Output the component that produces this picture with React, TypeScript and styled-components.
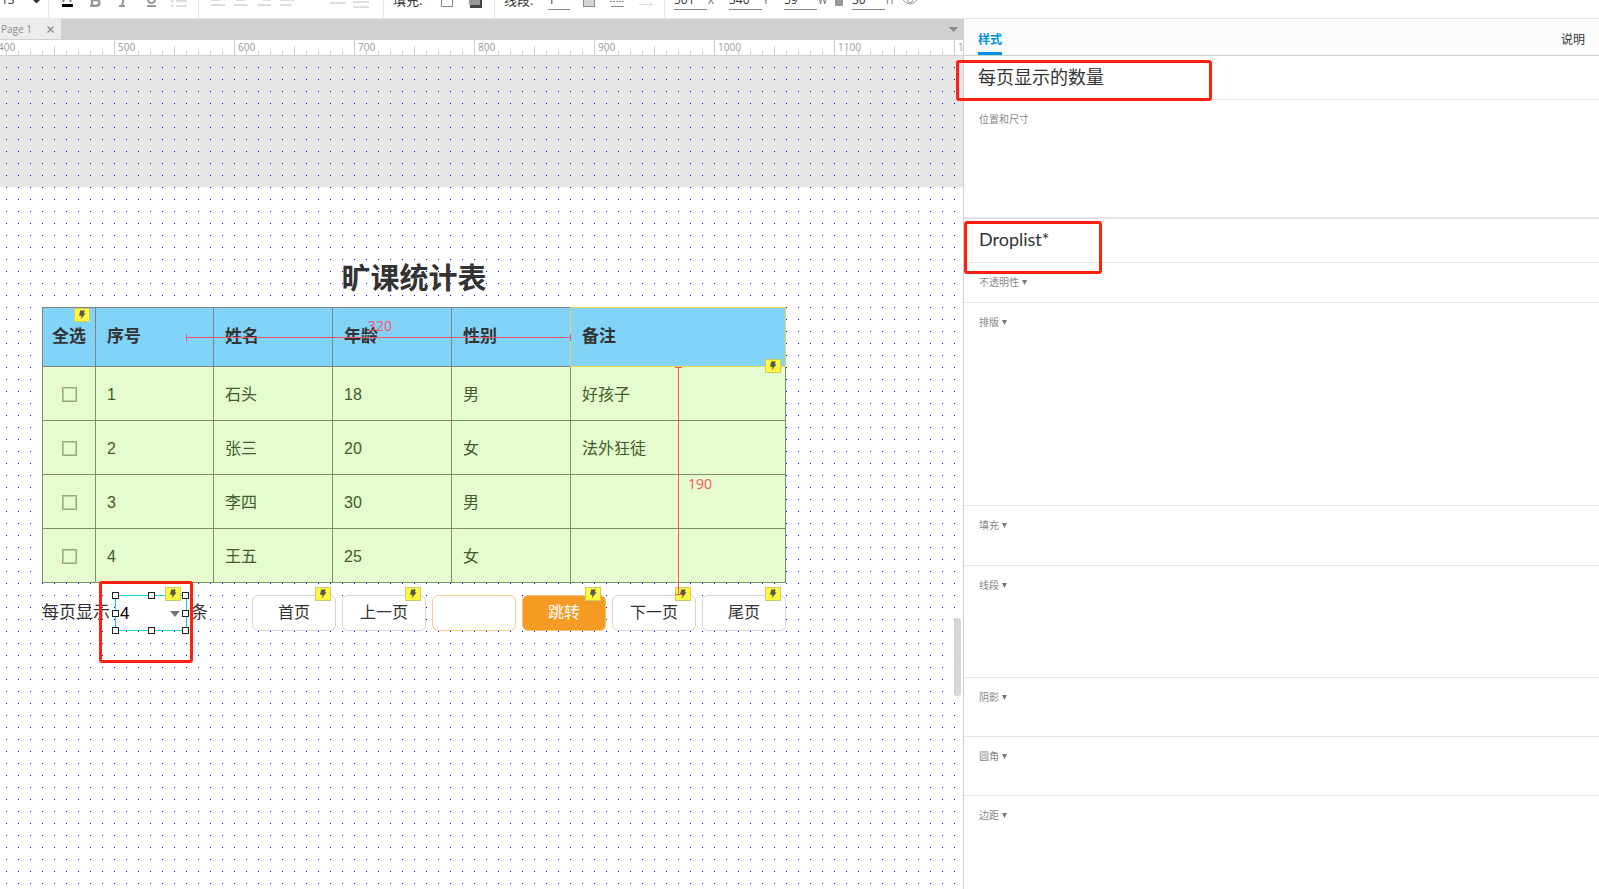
import React from "react";
import styled, { createGlobalStyle, css } from "styled-components";

const GlobalStyle = createGlobalStyle`
  * { box-sizing: border-box; }
  body {
    margin: 0;
    background: #fff;
    color: #333;
    font-family: "Liberation Sans", "Noto Sans CJK SC", sans-serif;
  }
  button, input, select {
    font: inherit;
    color: inherit;
    margin: 0;
    padding: 0;
    border: 0;
    border-radius: 0;
    background: none;
    outline: none;
  }
  svg { display: block; }
`;

const uiFont = `"Open Sans", "Noto Sans CJK SC", sans-serif`;

const Page = styled.div`
  display: flex;
  flex-direction: column;
  min-height: 100vh;
  overflow: hidden;
`;

/* ---------- toolbar ---------- */

const Toolbar = styled.header`
  display: flex;
  height: 19px;
  overflow: hidden;
  border-bottom: 1px solid #e5e5e5;
  background: #fff;
  font-family: ${uiFont};
  font-size: 12px;
`;

const Group = styled.div<{ $left?: number; $right?: number; $gap?: number; $last?: boolean }>`
  display: flex;
  flex: none;
  align-items: flex-end;
  gap: ${(p) => p.$gap ?? 0}px;
  padding: 0 ${(p) => p.$right ?? 11}px 8px ${(p) => p.$left ?? 9}px;
  border-right: ${(p) => (p.$last ? "0" : "1px solid #e5e5e5")};
`;

const Tool = styled.button<{ $before?: number }>`
  flex: none;
  width: 16px;
  height: 20px;
  margin-left: ${(p) => p.$before ?? 0}px;
`;

const ToolLabel = styled.span<{ $width: number }>`
  width: ${(p) => p.$width}px;
  height: 20px;
  font-size: 13px;
  line-height: 20px;
`;

const Field = styled.input<{ $width: number; $plain?: boolean }>`
  width: ${(p) => p.$width}px;
  height: 20px;
  font-size: 12px;
  line-height: 19px;
  border-bottom: 1px solid ${(p) => (p.$plain ? "transparent" : "#888")};
`;

const Unit = styled.label<{ $width: number }>`
  width: ${(p) => p.$width}px;
  height: 20px;
  padding-left: 1px;
  font-size: 10px;
  line-height: 20px;
  color: #666;
`;

const Lines = ({ rows, color = "#ddd" }: { rows: [number, number, number][]; color?: string }) => (
  <svg width="16" height="20" viewBox="0 0 16 20" fill={color}>
    {rows.map(([x, y, w]) => (
      <rect key={`${x}-${y}`} x={x} y={y} width={w} height="2" />
    ))}
  </svg>
);

/* ---------- workspace ---------- */

const Workspace = styled.div`
  display: flex;
  flex: 1;
`;

const Editor = styled.main`
  position: relative;
  display: flex;
  flex: 1;
  flex-direction: column;
  min-width: 0;
`;

const TabBar = styled.nav`
  display: flex;
  align-items: center;
  justify-content: space-between;
  height: 21px;
  padding-right: 5px;
  background: #d0d0d0;
`;

const PageTab = styled.div`
  display: flex;
  align-items: center;
  justify-content: space-between;
  width: 61px;
  height: 20px;
  padding: 0 7px 0 1px;
  align-self: flex-start;
  background: #ececec;
  color: #8c8c8c;
  font-family: ${uiFont};
  font-size: 10px;
`;

const Ruler = styled.div`
  display: flex;
  height: 16px;
  overflow: hidden;
  border-bottom: 1px solid #d0d0d0;
  background: #fff;
`;

const RulerMark = styled.span`
  flex: none;
  width: 120px;
  height: 15px;
  padding-left: 4px;
  color: #999;
  font-family: ${uiFont};
  font-size: 10px;
  line-height: 15px;
  background:
    linear-gradient(#ccc, #ccc) 0 0 / 1px 15px no-repeat,
    linear-gradient(#ccc, #ccc) 60px 100% / 1px 9px no-repeat,
    linear-gradient(90deg, #ccc 1px, transparent 1px) 0 100% / 12px 4px repeat-x;

  &:first-child { margin-left: -6px; }
`;

const Canvas = styled.section`
  flex: 1;
  padding: 203px 0 80px 42px;
  background:
    conic-gradient(from 270deg at 1px 1px, #0000f0 90deg, transparent 0) 6px 11px / 12px 12px,
    linear-gradient(#e5e5e5, #e5e5e5) 0 0 / 100% 131px no-repeat,
    #fff;
`;

const Artboard = styled.div`
  position: relative;
  width: 744px;
  font-size: 17px;
`;

const Title = styled.h1`
  margin: 0 0 8px;
  font-size: 29px;
  line-height: 40px;
  font-weight: 700;
  text-align: center;
`;

const Sheet = styled.table`
  width: 744px;
  table-layout: fixed;
  border-collapse: collapse;
`;

const cell = css<{ $center?: boolean }>`
  position: relative;
  padding: 0 0 0 ${(p) => (p.$center ? 0 : 11)}px;
  text-align: ${(p) => (p.$center ? "center" : "left")};
  line-height: 24px;
`;

const HeadCell = styled.th<{ $center?: boolean; $marked?: boolean }>`
  ${cell}
  height: 59px;
  border: 1px solid #7c8287;
  background: #81d3f8;
  ${(p) =>
    p.$marked &&
    css`
      &::after {
        content: "";
        position: absolute;
        inset: -1px;
        border: 1px solid #e8d84a;
      }
    `}
`;

const Cell = styled.td<{ $center?: boolean }>`
  ${cell}
  height: 54px;
  padding-top: 2px;
  border: 1px solid #7b9465;
  background: #e4fccf;
  color: #425c28;
  font-size: 16px;
`;

const RowCheck = styled.input`
  appearance: none;
  display: block;
  width: 15px;
  height: 15px;
  margin: 0 auto;
  border: 1px solid #94a97c;
  box-shadow: inset 0 0 0 1px #b9cda3;
`;

const BadgeBox = styled.span<{ $top: number; $right: number }>`
  position: absolute;
  z-index: 1;
  top: ${(p) => p.$top}px;
  right: ${(p) => p.$right}px;
  display: flex;
  align-items: center;
  justify-content: center;
  width: 16px;
  height: 14px;
  border: 1px solid #cccc66;
  background: #fff83e;
`;

const Badge = (p: { top?: number; right?: number }) => (
  <BadgeBox $top={p.top ?? -8} $right={p.right ?? 5}>
    <svg width="8" height="10" viewBox="0 0 8 10" fill="#555">
      <path d="M2.2 0.5H7L5.6 3.2H7.6L2.6 9.6L3.6 5.8H1Z" />
    </svg>
  </BadgeBox>
);

const Pager = styled.div`
  display: flex;
  align-items: center;
  justify-content: space-between;
  height: 36px;
  margin-top: 12px;
`;

const PageSize = styled.div`
  display: flex;
  align-items: center;
  line-height: 24px;
`;

const SizeText = styled.label`
  width: 73px;
  white-space: nowrap;
`;

const SizeSuffix = styled.span`
  padding-left: 4px;
`;

const Selected = styled.div`
  position: relative;
  width: 72px;
  height: 36px;
  border: 1px solid #0cd6e0;
  background: #fff;
`;

const SizeSelect = styled.select`
  appearance: none;
  width: 70px;
  height: 34px;
  padding: 2px 0 0 4px;
  color: #000;
`;

const SelectArrow = styled.svg`
  position: absolute;
  top: 15px;
  right: 6px;
  pointer-events: none;
`;

const Handle = styled.i<{ $x: number; $y: number }>`
  position: absolute;
  z-index: 2;
  left: ${(p) => p.$x}px;
  top: ${(p) => p.$y}px;
  width: 7px;
  height: 7px;
  border: 1px solid #222;
  background: #fff;
`;

const Buttons = styled.div`
  display: flex;
  gap: 6px;
`;

const Slot = styled.div`
  position: relative;
  width: 84px;
  height: 36px;
`;

const PageButton = styled.button<{ $primary?: boolean }>`
  width: 84px;
  height: 36px;
  border: 1px solid ${(p) => (p.$primary ? "#f9c07a" : "#d4d4d4")};
  border-radius: 6px;
  background: ${(p) => (p.$primary ? "#f59a23" : "#fff")};
  color: ${(p) => (p.$primary ? "#fff" : "#333")};
  font-size: 16px;
  line-height: 24px;
`;

const PageInput = styled.input`
  width: 84px;
  height: 36px;
  padding: 0 8px;
  border: 1px solid #fac98d;
  border-radius: 6px;
  background: #fff;
`;

const Distance = styled.div<{ $x: number; $y: number; $length: number; $vertical?: boolean }>`
  position: absolute;
  z-index: 3;
  left: ${(p) => p.$x}px;
  top: ${(p) => p.$y}px;
  width: ${(p) => (p.$vertical ? 7 : p.$length)}px;
  height: ${(p) => (p.$vertical ? p.$length : 7)}px;
  border: 0 solid #ff5060;
  border-width: ${(p) => (p.$vertical ? "1px 0" : "0 1px")};
  background: linear-gradient(#ff5060, #ff5060) center /
    ${(p) => (p.$vertical ? "1px 100%" : "100% 1px")} no-repeat;
`;

const DistanceText = styled.span<{ $x: number; $y: number }>`
  position: absolute;
  z-index: 3;
  left: ${(p) => p.$x}px;
  top: ${(p) => p.$y}px;
  color: #ff5060;
  font-family: ${uiFont};
  font-size: 14px;
  line-height: 18px;
`;

const ScrollThumb = styled.div`
  position: absolute;
  top: 599px;
  right: 2px;
  width: 7px;
  height: 78px;
  border-radius: 3px;
  background: rgba(208, 208, 208, 0.85);
`;

const Highlight = styled.div<{ $x: number; $y: number; $w: number; $h: number }>`
  position: absolute;
  z-index: 4;
  left: ${(p) => p.$x}px;
  top: ${(p) => p.$y}px;
  width: ${(p) => p.$w}px;
  height: ${(p) => p.$h}px;
  border: 3px solid #ff2010;
  border-radius: 3px;
  pointer-events: none;
`;

/* ---------- inspector ---------- */

const Inspector = styled.aside`
  position: relative;
  flex: none;
  width: 636px;
  border-left: 1px solid #cfcfcf;
  background: #fff;
`;

const InspectorTabs = styled.div`
  display: flex;
  justify-content: space-between;
  height: 37px;
  padding: 0 14px;
  border-bottom: 1px solid #cfcfcf;
  background: #fcfcfc;
`;

const InspectorTab = styled.button<{ $active?: boolean }>`
  height: 36px;
  padding-top: 8px;
  border-bottom: 3px solid ${(p) => (p.$active ? "#0090e0" : "transparent")};
  color: ${(p) => (p.$active ? "#0090e0" : "#333")};
  font-size: 12px;
  line-height: 20px;
  font-weight: ${(p) => (p.$active ? 700 : 400)};
`;

const NameRow = styled.div`
  height: 44px;
  padding: 9px 14px;
  border-bottom: 1px solid #e5e5e5;
  font-size: 18px;
  line-height: 26px;
`;

const NameInput = styled.input`
  display: block;
  width: 100%;
  height: 26px;
`;

const TypeName = styled.h2`
  margin: 0;
  padding-left: 1px;
  font-family: Lato, "Noto Sans CJK SC", sans-serif;
  font-size: 18px;
  line-height: 22px;
  font-weight: 400;
`;

const Section = styled.section<{ $height: number; $border?: number }>`
  min-height: ${(p) => p.$height}px;
  padding: 10px 15px 9px;
  border-bottom: ${(p) => p.$border ?? 1}px solid #e5e5e5;
  color: #888;
  font-size: 10px;
  line-height: 20px;
`;

const SectionToggle = styled.button`
  display: flex;
  align-items: center;
  gap: 3px;
  height: 20px;

  svg { margin-bottom: 2px; }
`;

const sections: [string, number][] = [
  ["不透明性", 40],
  ["排版", 203],
  ["填充", 60],
  ["线段", 112],
  ["阴影", 59],
  ["圆角", 59],
  ["边距", 60],
];

const rows = [
  ["1", "石头", "18", "男", "好孩子"],
  ["2", "张三", "20", "女", "法外狂徒"],
  ["3", "李四", "30", "男", ""],
  ["4", "王五", "25", "女", ""],
];

const handles = [
  [-4, -4], [32, -4], [66, -4],
  [-4, 14], [66, 14],
  [-4, 31], [32, 31], [66, 31],
];

export default function App() {
  return (
    <Page>
      <GlobalStyle />
      <Toolbar>
        <Group $left={1} $right={0}>
          <Field $width={31} $plain defaultValue="13" aria-label="字号" />
          <Tool aria-label="选择字号">
            <svg width="9" height="20" viewBox="0 0 9 20" fill="#333"><path d="M1 10h7L4.500 13.500z" /></svg>
          </Tool>
        </Group>
        <Group $left={10} $gap={12}>
          <Tool aria-label="文字颜色">
            <svg width="16" height="20" viewBox="0 0 16 20">
              <path d="M4 12L8 2L12 12M5.5 9H10.5" fill="none" stroke="#888" strokeWidth="2" />
              <rect x="3" y="14" width="11" height="3" fill="#000" />
            </svg>
          </Tool>
          <Tool aria-label="粗体">
            <svg width="16" height="20" viewBox="0 0 16 20" fill="none" stroke="#999" strokeWidth="2.4">
              <path d="M3 15.8H9.5Q12.4 15.8 12.4 12.8T9.5 10H5M5 5V16M5 5H8Q11 5 11 7.5T8 10" />
            </svg>
          </Tool>
          <Tool aria-label="斜体">
            <svg width="16" height="20" viewBox="0 0 16 20" fill="none" stroke="#999" strokeWidth="2">
              <path d="M4 16H10M7 16L9.500 5M7 5H12" />
            </svg>
          </Tool>
          <Tool aria-label="下划线">
            <svg width="16" height="20" viewBox="0 0 16 20" fill="none" stroke="#999" strokeWidth="2">
              <path d="M5 3V9Q5 13 8.500 13T12 9V3M4 16H13" />
            </svg>
          </Tool>
          <Tool aria-label="列表">
            <Lines rows={[[0, 10, 3], [5, 10, 11], [0, 15, 3], [5, 15, 11]]} />
          </Tool>
        </Group>
        <Group $left={11} $right={14} $gap={7}>
          <Tool aria-label="左对齐"><Lines rows={[[1, 9, 9], [1, 14, 14]]} /></Tool>
          <Tool aria-label="居中"><Lines rows={[[3, 9, 9], [1, 14, 14]]} /></Tool>
          <Tool aria-label="右对齐"><Lines rows={[[7, 9, 8], [2, 14, 13]]} /></Tool>
          <Tool aria-label="两端对齐"><Lines rows={[[1, 9, 14], [1, 14, 12]]} /></Tool>
          <Tool $before={28} aria-label="顶部对齐"><Lines rows={[[0, 12, 16]]} /></Tool>
          <Tool aria-label="垂直居中"><Lines rows={[[0, 11, 16], [0, 16, 16]]} /></Tool>
        </Group>
        <Group>
          <ToolLabel $width={46}>填充:</ToolLabel>
          <Tool aria-label="填充颜色">
            <svg width="16" height="20" viewBox="0 0 16 20"><rect x="2.500" y="5.500" width="11" height="11" fill="#fff" stroke="#888" /></svg>
          </Tool>
          <Tool $before={12} aria-label="阴影">
            <svg width="16" height="20" viewBox="0 0 16 20"><rect x="3" y="6" width="12" height="12" fill="#444" /><rect x="2" y="4" width="11" height="11" fill="#999" /></svg>
          </Tool>
        </Group>
        <Group>
          <ToolLabel $width={44}>线段:</ToolLabel>
          <Field $width={22} defaultValue="1" aria-label="线宽" />
          <Tool $before={11} aria-label="线段颜色">
            <svg width="16" height="20" viewBox="0 0 16 20"><rect x="2.500" y="5.500" width="11" height="11" fill="#d5d5d5" stroke="#888" /></svg>
          </Tool>
          <Tool $before={12} aria-label="线型">
            <svg width="16" height="20" viewBox="0 0 16 20" stroke="#888"><path d="M1 11.500H16" strokeDasharray="2 1" /><path d="M2 16.500H15" /></svg>
          </Tool>
          <Tool $before={12} aria-label="箭头">
            <svg width="16" height="20" viewBox="0 0 16 20" fill="none" stroke="#ddd"><path d="M2 14.500H15M12 11.500L15 14.500L12 17.500" /></svg>
          </Tool>
        </Group>
        <Group $last>
          <Field id="pos-x" $width={33} defaultValue="501" />
          <Unit htmlFor="pos-x" $width={22}>X</Unit>
          <Field id="pos-y" $width={33} defaultValue="340" />
          <Unit htmlFor="pos-y" $width={22}>Y</Unit>
          <Field id="size-w" $width={33} defaultValue="59" />
          <Unit htmlFor="size-w" $width={14}>W</Unit>
          <Tool aria-label="锁定比例">
            <svg width="16" height="20" viewBox="0 0 16 20"><rect x="4" y="8" width="8" height="8" rx="1" fill="#999" /></svg>
          </Tool>
          <ToolLabel $width={5} />
          <Field id="size-h" $width={33} defaultValue="30" />
          <Unit htmlFor="size-h" $width={17}>H</Unit>
          <Tool aria-label="可见">
            <svg width="16" height="20" viewBox="0 0 16 20" fill="none" stroke="#999"><path d="M0.500 9.500Q8 0.500 15.500 9.500Q8 18.500 0.500 9.500Z" /><circle cx="8" cy="9.500" r="3" /></svg>
          </Tool>
        </Group>
      </Toolbar>

      <Workspace>
        <Editor>
          <TabBar>
            <PageTab>
              Page 1
              <button aria-label="关闭页面">
                <svg width="7" height="7" viewBox="0 0 7 7" stroke="#888" strokeWidth="1.300"><path d="M0.500 0.500L6.500 6.500M6.500 0.500L0.500 6.500" /></svg>
              </button>
            </PageTab>
            <button aria-label="页面列表">
              <svg width="9" height="5" viewBox="0 0 9 5" fill="#888"><path d="M0 0H9L4.500 5Z" /></svg>
            </button>
          </TabBar>
          <Ruler>
            {[400, 500, 600, 700, 800, 900, 1000, 1100, 1200].map((n) => (
              <RulerMark key={n}>{n}</RulerMark>
            ))}
          </Ruler>
          <Canvas>
            <Artboard>
              <Title>旷课统计表</Title>
              <Sheet>
                <colgroup>
                  <col width="53" />
                  <col width="118" />
                  <col width="119" />
                  <col width="119" />
                  <col width="119" />
                  <col width="215" />
                </colgroup>
                <thead>
                  <tr>
                    <HeadCell $center>全选<Badge top={0} right={5} /></HeadCell>
                    <HeadCell>序号</HeadCell>
                    <HeadCell>姓名</HeadCell>
                    <HeadCell>年龄</HeadCell>
                    <HeadCell>性别</HeadCell>
                    <HeadCell $marked>备注<Badge top={51} right={4} /></HeadCell>
                  </tr>
                </thead>
                <tbody>
                  {rows.map((r) => (
                    <tr key={r[0]}>
                      <Cell $center><RowCheck type="checkbox" aria-label={r[1]} /></Cell>
                      {r.map((v, i) => <Cell key={i}>{v}</Cell>)}
                    </tr>
                  ))}
                </tbody>
              </Sheet>
              <Pager>
                <PageSize>
                  <SizeText htmlFor="page-size">每页显示</SizeText>
                  <Selected>
                    <SizeSelect id="page-size" defaultValue="4"><option>4</option></SizeSelect>
                    <SelectArrow width="10" height="6" viewBox="0 0 10 6" fill="#777"><path d="M0 0H10L5 6Z" /></SelectArrow>
                    <Badge top={-9} right={5} />
                    {handles.map(([x, y]) => <Handle key={`${x},${y}`} $x={x} $y={y} />)}
                  </Selected>
                  <SizeSuffix>条</SizeSuffix>
                </PageSize>
                <Buttons>
                  <Slot><PageButton>首页</PageButton><Badge /></Slot>
                  <Slot><PageButton>上一页</PageButton><Badge /></Slot>
                  <Slot><PageInput aria-label="页码" /></Slot>
                  <Slot><PageButton $primary>跳转</PageButton><Badge /></Slot>
                  <Slot><PageButton>下一页</PageButton><Badge /></Slot>
                  <Slot><PageButton>尾页</PageButton><Badge /></Slot>
                </Buttons>
              </Pager>
              <Distance $x={144} $y={75} $length={385} />
              <DistanceText $x={326} $y={58}>320</DistanceText>
              <Distance $x={633} $y={108} $length={228} $vertical />
              <DistanceText $x={646} $y={216}>190</DistanceText>
              <Highlight $x={57} $y={322} $w={94} $h={82} />
            </Artboard>
          </Canvas>
          <ScrollThumb />
        </Editor>

        <Inspector>
          <InspectorTabs>
            <InspectorTab $active>样式</InspectorTab>
            <InspectorTab>说明</InspectorTab>
          </InspectorTabs>
          <NameRow><NameInput defaultValue="每页显示的数量" aria-label="名称" /></NameRow>
          <Section $height={119} $border={2}>位置和尺寸</Section>
          <NameRow><TypeName>Droplist*</TypeName></NameRow>
          {sections.map(([name, height], i) => (
            <Section key={name} $height={height} $border={i === sections.length - 1 ? 0 : 1}>
              <SectionToggle>
                {name}
                <svg width="5" height="5" viewBox="0 0 5 5" fill="#777"><path d="M0 0H5L2.500 5Z" /></svg>
              </SectionToggle>
            </Section>
          ))}
          <Highlight $x={-8} $y={41} $w={256} $h={41} />
          <Highlight $x={0} $y={202} $w={138} $h={53} />
        </Inspector>
      </Workspace>
    </Page>
  );
}
